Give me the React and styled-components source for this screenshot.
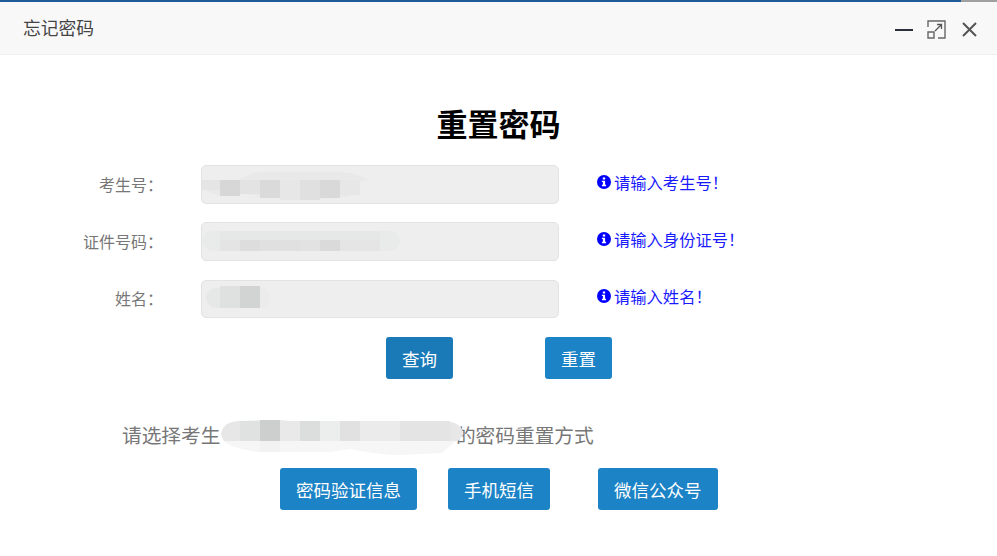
import React from "react";
import styled, { createGlobalStyle } from "styled-components";

const GlobalStyle = createGlobalStyle`
  html, body {
    margin: 0;
    padding: 0;
    background: #fff;
    font-family: "Liberation Sans", "Noto Sans CJK SC", sans-serif;
  }
`;

const Page = styled.div`
  width: 997px;
  height: 556px;
  overflow: hidden;
  background: #fff;
  display: flex;
  flex-direction: column;
`;

const TopStrip = styled.div`
  height: 2px;
  flex: none;
  background: linear-gradient(to right, #1f5c99 961px, #a0a0a0 961px);
`;

const Header = styled.header`
  height: 53px;
  flex: none;
  box-sizing: border-box;
  background: #f8f8f8;
  border-bottom: 1px solid #eee;
  display: flex;
  align-items: center;
  justify-content: space-between;
  padding: 0 19px 0 23px;
`;

const HeaderTitle = styled.div`
  font-size: 17.8px;
  color: #444;
  margin-bottom: 2px;
`;

const WindowTools = styled.div`
  display: flex;
  align-items: center;
  gap: 13px;
  margin-top: 2px;
`;

const ToolIcon = styled.svg`
  width: 19px;
  height: 19px;
  display: block;
  fill: none;
`;

const Main = styled.main`
  display: flex;
  flex-direction: column;
`;

const Heading = styled.h1`
  margin: 52px 0 0;
  text-align: center;
  font-size: 31px;
  line-height: 38px;
  font-weight: 700;
  color: #000;
`;

const Form = styled.div`
  margin-top: 20px;
  display: flex;
  flex-direction: column;
  gap: 18px;
`;

const Row = styled.div`
  display: flex;
  align-items: center;
  height: ${(p) => (p.$short ? 38 : 39)}px;
  margin-top: ${(p) => (p.$short ? 1 : 0)}px;
`;

const Label = styled.label`
  width: 163px;
  text-align: right;
  font-size: 16px;
  color: #777;
  position: relative;
  top: -1px;
`;

const InputBox = styled.div`
  margin-left: 38px;
  width: 358px;
  height: 100%;
  box-sizing: border-box;
  background: #eee;
  border: 1px solid #e3e3e3;
  border-radius: 5px;
  position: relative;
  overflow: hidden;
`;

const Mosaic = styled.svg`
  position: absolute;
  left: 0;
  top: 0;
  display: block;
`;

const Hint = styled.div`
  margin-left: 38px;
  display: flex;
  align-items: center;
  gap: 3px;
  font-size: 16.3px;
  color: #1a1aff;
  position: relative;
  top: -3px;
`;

const HintIcon = styled.svg`
  width: 14px;
  height: 14px;
  display: block;
  fill: #00f;
`;

const ActionRow = styled.div`
  margin-top: 19px;
  padding-left: 386px;
  display: flex;
  gap: 92px;
`;

const Button = styled.button`
  height: 42px;
  box-sizing: border-box;
  padding: 0 16px;
  border: 0;
  border-radius: 3px;
  background: ${(p) => (p.$active ? "#1a7ab8" : "#1c83c6")};
  color: #fff;
  font: inherit;
  font-size: 17.5px;
`;

const Prompt = styled.div`
  margin-top: 43px;
  padding-left: 122px;
  width: 472px;
  font-size: 19.7px;
  line-height: 28px;
  color: #777;
  position: relative;
  white-space: nowrap;
`;

const Masked = styled.span`
  display: inline-block;
  width: 235.5px;
  height: 1px;
`;

const PromptMask = styled(Mosaic)`
  left: 220px;
  top: -11px;
`;

const MethodRow = styled.div`
  margin-top: 18px;
  padding-left: 280px;
  display: flex;
`;

const MethodSlot = styled.div`
  margin-right: ${(p) => p.$gap}px;
`;

const cell = (x, y, w, h, fill) => <rect key={`${x}-${y}`} x={x} y={y} width={w} height={h} fill={fill} />;

const FirstMask = () => (
  <Mosaic width="356" height="37" viewBox="0 0 356 37">
    <path d="M0 14 L38 14 Q44 7 60 6 L140 6 Q158 8 166 14 L158 15 L158 28 Q130 34 96 34 Q60 31 38 27 L18 30 Q4 26 0 20Z" fill="#e8e9e8" />
    {cell(0, 14, 18, 10, "#e4e5e4")}
    {cell(18, 14, 20, 16, "#d6d7d6")}
    {cell(38, 14, 20, 14, "#e2e3e2")}
    {cell(58, 14, 20, 18, "#d9dad9")}
    {cell(78, 14, 20, 20, "#e6e7e6")}
    {cell(98, 14, 20, 20, "#dfe0df")}
    {cell(118, 14, 20, 18, "#d8d9d8")}
    {cell(138, 14, 20, 15, "#e6e7e6")}
  </Mosaic>
);

const SecondMask = () => (
  <Mosaic width="356" height="37" viewBox="0 0 356 37">
    <rect x="0" y="8" width="198" height="20" rx="10" fill="#e9eaea" />
    {cell(18, 8, 160, 9, "#e6e7e7")}
    {cell(18, 17, 20, 11, "#e4e4e4")}
    {cell(38, 17, 20, 11, "#dddddd")}
    {cell(58, 17, 40, 11, "#e0e0e0")}
    {cell(98, 17, 20, 11, "#e2e2e2")}
    {cell(118, 17, 20, 11, "#dadada")}
    {cell(138, 17, 40, 11, "#e5e5e5")}
  </Mosaic>
);

const ThirdMask = () => (
  <Mosaic width="356" height="36" viewBox="0 0 356 36">
    <rect x="30" y="7" width="38" height="20" rx="10" fill="#ebebeb" />
    <rect x="4" y="7" width="30" height="20" rx="10" fill="#e6e8e7" />
    {cell(18, 5, 20, 22, "#dfe1e0")}
    {cell(38, 5, 20, 22, "#d2d4d3")}
  </Mosaic>
);

const NameMask = () => (
  <PromptMask width="250" height="50" viewBox="0 0 250 50">
    <path d="M4 30 Q12 38 40 41 L110 41 L130 38 Q160 44 180 44 L222 42 L236 30Z" fill="#f5f6f5" />
    <path d="M1 24 Q2 11 18 10 L60 9 L80 11 L170 10 L232 11 Q243 14 243 24 L238 30 L4 30Z" fill="#e6e7e6" />
    {cell(20, 10, 20, 20, "#e0e2e1")}
    {cell(40, 9, 20, 21, "#cdcfce")}
    {cell(60, 10, 20, 20, "#e8e9e8")}
    {cell(80, 10, 20, 20, "#dcdedd")}
    {cell(100, 10, 20, 20, "#eceeed")}
    {cell(120, 10, 20, 20, "#e0e1e0")}
    {cell(140, 10, 40, 20, "#eaebea")}
    {cell(180, 10, 50, 20, "#e3e4e3")}
    {cell(40, 30, 20, 11, "#f1f2f1")}
  </PromptMask>
);

const InfoIcon = () => (
  <HintIcon viewBox="0 0 14 14">
    <path
      fillRule="evenodd"
      d="M7 0a7 7 0 1 1 0 14A7 7 0 0 1 7 0ZM5.8 2.6v2h2.4v-2H5.8ZM4.9 5.7v1.4h1v2.6h-1v1.5h4.2V9.7h-1V5.7H4.9Z"
    />
  </HintIcon>
);

const rows = [
  { label: "考生号：", hint: "请输入考生号！", mask: <FirstMask /> },
  { label: "证件号码：", hint: "请输入身份证号！", mask: <SecondMask /> },
  { label: "姓名：", hint: "请输入姓名！", mask: <ThirdMask />, short: true },
];

export default function App() {
  return (
    <Page>
      <GlobalStyle />
      <TopStrip />
      <Header>
        <HeaderTitle>忘记密码</HeaderTitle>
        <WindowTools>
          <ToolIcon viewBox="0 0 19 19">
            <path d="M0 10h18" stroke="#2b2f3a" strokeWidth="2" />
          </ToolIcon>
          <ToolIcon viewBox="0 0 19 19">
            <path d="M1 7V1h17v17h-7" stroke="#666" strokeWidth="1.4" />
            <path d="M1 12h6v6H1z" stroke="#666" strokeWidth="1.4" />
            <path d="M8 11l6-6M10 4.5h4.5V9" stroke="#555" strokeWidth="1.3" />
          </ToolIcon>
          <ToolIcon viewBox="0 0 19 19">
            <path d="M4 3l13 13M17 3L4 16" stroke="#555" strokeWidth="2" />
          </ToolIcon>
        </WindowTools>
      </Header>
      <Main>
        <Heading>重置密码</Heading>
        <Form>
          {rows.map((row) => (
            <Row key={row.label} $short={row.short}>
              <Label>{row.label}</Label>
              <InputBox>{row.mask}</InputBox>
              <Hint>
                <InfoIcon />
                {row.hint}
              </Hint>
            </Row>
          ))}
        </Form>
        <ActionRow>
          <Button $active>查询</Button>
          <Button>重置</Button>
        </ActionRow>
        <Prompt>
          请选择考生
          <Masked />
          的密码重置方式
          <NameMask />
        </Prompt>
        <MethodRow>
          <MethodSlot $gap={31}>
            <Button>密码验证信息</Button>
          </MethodSlot>
          <MethodSlot $gap={48}>
            <Button>手机短信</Button>
          </MethodSlot>
          <MethodSlot $gap={0}>
            <Button>微信公众号</Button>
          </MethodSlot>
        </MethodRow>
      </Main>
    </Page>
  );
}
